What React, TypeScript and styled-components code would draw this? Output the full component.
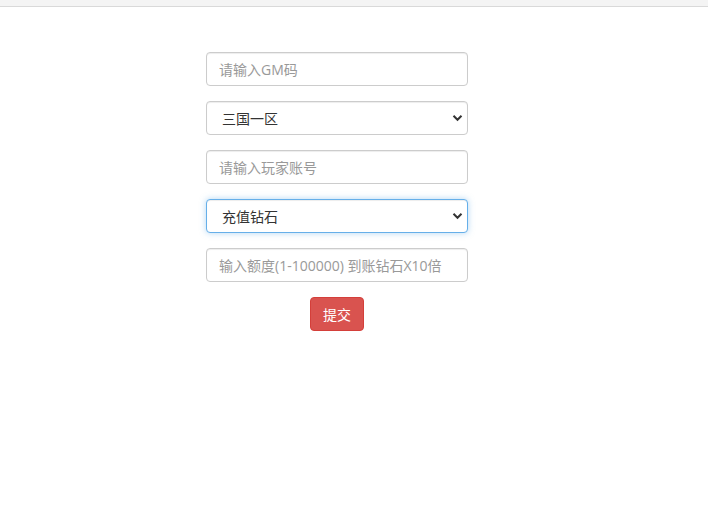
import React from "react";
import styled, { createGlobalStyle } from "styled-components";

const fontStack = `"Open Sans", "Noto Sans CJK SC", sans-serif`;

const GlobalStyle = createGlobalStyle`
  html, body {
    margin: 0;
    padding: 0;
    background: #fff;
    font-family: ${fontStack};
  }
`;

const TopBar = styled.div`
  height: 6px;
  background: #f4f4f4;
  border-bottom: 1px solid #d9d9d9;
`;

const Form = styled.form`
  width: 262px;
  margin: 45px 0 0 206px;
  display: flex;
  flex-direction: column;
  gap: 15px;
`;

const Input = styled.input`
  box-sizing: border-box;
  width: 100%;
  height: 34px;
  padding: 6px 12px;
  font: 14px ${fontStack};
  color: #555;
  border: 1px solid #ccc;
  border-radius: 4px;
  box-shadow: inset 0 1px 1px rgba(0, 0, 0, 0.075);
  outline: none;

  &::placeholder {
    color: #999;
  }
`;

const SelectWrap = styled.div`
  position: relative;
`;

const Select = styled.select<{ $focused?: boolean }>`
  box-sizing: border-box;
  width: 100%;
  height: 34px;
  padding: 6px 12px 6px 15px;
  font: 14px ${fontStack};
  color: #333;
  background: #fff;
  border: 1px solid ${({ $focused }) => ($focused ? "#66afe9" : "#ccc")};
  border-radius: 4px;
  box-shadow: ${({ $focused }) =>
    $focused
      ? "inset 0 1px 1px rgba(0,0,0,.075), 0 0 6px rgba(102,175,233,.5)"
      : "inset 0 1px 1px rgba(0, 0, 0, 0.075)"};
  appearance: none;
  outline: none;
`;

const Chevron = styled.svg`
  position: absolute;
  right: 5px;
  top: 13px;
  width: 11px;
  height: 8px;
  pointer-events: none;
`;

const ButtonRow = styled.div`
  display: flex;
  justify-content: center;
`;

const SubmitButton = styled.button`
  box-sizing: border-box;
  width: 54px;
  height: 34px;
  padding: 0;
  font: 14px ${fontStack};
  color: #fff;
  background: #d9534f;
  border: 1px solid #d43f3a;
  border-radius: 4px;
  cursor: pointer;
`;

function ArrowDown() {
  return (
    <Chevron viewBox="0 0 11 8">
      <path d="M1.5 1.8 L5.5 5.8 L9.5 1.8" fill="none" stroke="#333" strokeWidth="2" />
    </Chevron>
  );
}

export default function App() {
  return (
    <>
      <GlobalStyle />
      <TopBar />
      <Form onSubmit={(e) => e.preventDefault()}>
        <Input placeholder="请输入GM码" />
        <SelectWrap>
          <Select defaultValue="1">
            <option value="1">三国一区</option>
          </Select>
          <ArrowDown />
        </SelectWrap>
        <Input placeholder="请输入玩家账号" />
        <SelectWrap>
          <Select $focused defaultValue="1">
            <option value="1">充值钻石</option>
          </Select>
          <ArrowDown />
        </SelectWrap>
        <Input placeholder="输入额度(1-100000) 到账钻石X10倍" />
        <ButtonRow>
          <SubmitButton type="submit">提交</SubmitButton>
        </ButtonRow>
      </Form>
    </>
  );
}
